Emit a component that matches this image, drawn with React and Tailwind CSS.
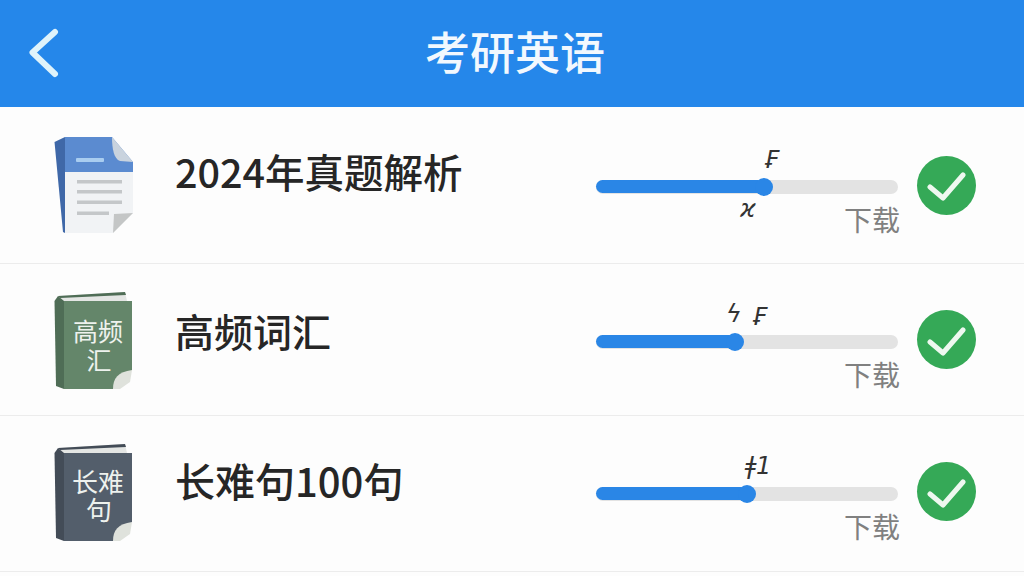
const CJK = "font-['Noto_Sans_CJK_SC','Noto_Sans',sans-serif]";

const ROWS = [
  {
    title: '2024年真题解析',
    icon: 'doc',
    progress: 168,
    rowClass: 'h-[157px]',
    titleClass: 'mb-[28px] text-[39.5px]',
    marks: [
      { text: '₣', left: 168, top: 8 },
      { text: 'ϰ', left: 144, top: 57 },
    ],
  },
  {
    title: '高频词汇',
    icon: 'green',
    progress: 139,
    rowClass: 'h-[152px]',
    titleClass: 'mb-[19px] text-[39px]',
    marks: [
      { text: 'ϟ', left: 130, top: 7 },
      { text: '₣', left: 156, top: 10 },
    ],
  },
  {
    title: '长难句100句',
    icon: 'slate',
    progress: 151,
    rowClass: 'h-[156px] pb-[4px]',
    titleClass: 'mb-[24px] ml-[-2px] text-[40px]',
    marks: [{ text: 'ǂ1', left: 149, top: 7 }],
  },
];

function DocIcon() {
  return (
    <svg width="80" height="100" viewBox="0 0 80 100" className="shrink-0">
      <path d="M0.5 7 L11 2 L11 98 L9 97 Z" fill="#3f68a8" />
      <path d="M11 2 L58 2 L79 27 L79 37 L11 37 Z" fill="#5b8bd0" />
      <path d="M11 37 L79 37 L79 78 L59 98 L11 98 Z" fill="#f1f3f5" />
      <path d="M58 2 C58 14 60 24 66 26 L79 27 Z" fill="#c9d3de" />
      <path d="M60 79 L79 78 L59 98 Z" fill="#c4c6c6" />
      <rect x="22" y="23" width="28" height="4" rx="1" fill="#a9cdf0" />
      <g fill="#c4c7c9">
        <rect x="23" y="45" width="45" height="3.5" />
        <rect x="23" y="55" width="45" height="3.5" />
        <rect x="23" y="65.5" width="45" height="3.5" />
        <rect x="23" y="76.5" width="32" height="3.5" />
      </g>
    </svg>
  );
}

function BookIcon({ cover, spine, lines, size, base1, base2 }) {
  return (
    <svg width="80" height="100" viewBox="0 0 80 100" className="shrink-0">
      <path d="M4 6 L71 2 L73 11 L9 12 Z" fill="#e4e6e4" />
      <path d="M4 6 L71 2 L72 5 L6 8 Z" fill={spine} />
      <path d="M0.5 11 L4 6 L10 11 L10 99 L2 96 Z" fill={spine} />
      <path d="M10 11 L78 11 L78 80 L59 99 L10 99 Z" fill={cover} />
      <path d="M59 99 C59 88 64 82 78 80 L76 92 L66 99 Z" fill="#dfe2dc" />
      <text textAnchor="middle" fontSize={size} fill="#eef2ee" fontFamily="'Noto Sans CJK SC', sans-serif">
        <tspan x="44" y={base1}>{lines[0]}</tspan>
        <tspan x="45" y={base2}>{lines[1]}</tspan>
      </text>
    </svg>
  );
}

function RowIcon({ kind }) {
  if (kind === 'doc') return <DocIcon />;
  if (kind === 'green') {
    return <BookIcon cover="#64866a" spine="#4f6d56" lines={['高频', '汇']} size={25} base1={51} base2={80} />;
  }
  return <BookIcon cover="#535e6b" spine="#434c57" lines={['长难', '句']} size={26} base1={50} base2={78} />;
}

function Progress({ value, marks }) {
  return (
    <div className="relative w-[302px] shrink-0 mt-[4px] pt-[40px]">
      {marks.map(m => (
        <span
          key={m.text + m.left}
          className="absolute text-[24px] leading-[24px] italic text-[#333] font-['DejaVu_Sans',sans-serif]"
          style={{ left: m.left, top: m.top }}
        >
          {m.text}
        </span>
      ))}
      <div className="relative h-[14px] rounded-full bg-[#e3e3e3]">
        <div className="h-[13px] rounded-full bg-[#2a86e6]" style={{ width: value }} />
        <div
          className="absolute top-[-2px] w-[18px] h-[18px] rounded-full bg-[#2a86e6]"
          style={{ left: value - 9 }}
        />
      </div>
      <p className="mt-[10px] mr-[-2px] h-[30px] text-right text-[28px] leading-[30px] text-[#808080]">下载</p>
    </div>
  );
}

function CheckBadge() {
  return (
    <div className="ml-[19px] w-[59px] h-[59px] rounded-full bg-[#35a957] flex items-center justify-center shrink-0">
      <svg width="40" height="34" viewBox="0 0 40 34" fill="none">
        <path d="M3 19 L16 30 L36 7" stroke="#eef8f0" strokeWidth="5" strokeLinecap="round" strokeLinejoin="round" />
      </svg>
    </div>
  );
}

export default function App() {
  return (
    <div className={`w-[1024px] h-[576px] overflow-hidden bg-[#fdfdfd] ${CJK}`}>
      <header className="h-[107px] bg-[#2587ea] flex items-center relative">
        <svg width="32" height="50" viewBox="0 0 32 50" fill="none" className="absolute left-[29px] top-[28px]">
          <path d="M26 4 L3.5 24.5 L26 46" stroke="#dff3fb" strokeWidth="6" strokeLinecap="round" strokeLinejoin="round" />
        </svg>
        <h1 className="flex-1 pl-[6px] pb-[7px] text-center text-[45px] font-medium leading-none text-[#f2f8fe]">考研英语</h1>
      </header>

      {ROWS.map(row => (
        <div
          key={row.title}
          className={`${row.rowClass} flex items-center pl-[54px] pr-[48px] border-b border-[#ececec]`}
        >
          <RowIcon kind={row.icon} />
          <p className={`ml-[41px] flex-1 font-medium leading-none text-[#262626] ${row.titleClass}`}>{row.title}</p>
          <Progress value={row.progress} marks={row.marks} />
          <CheckBadge />
        </div>
      ))}
    </div>
  );
}
